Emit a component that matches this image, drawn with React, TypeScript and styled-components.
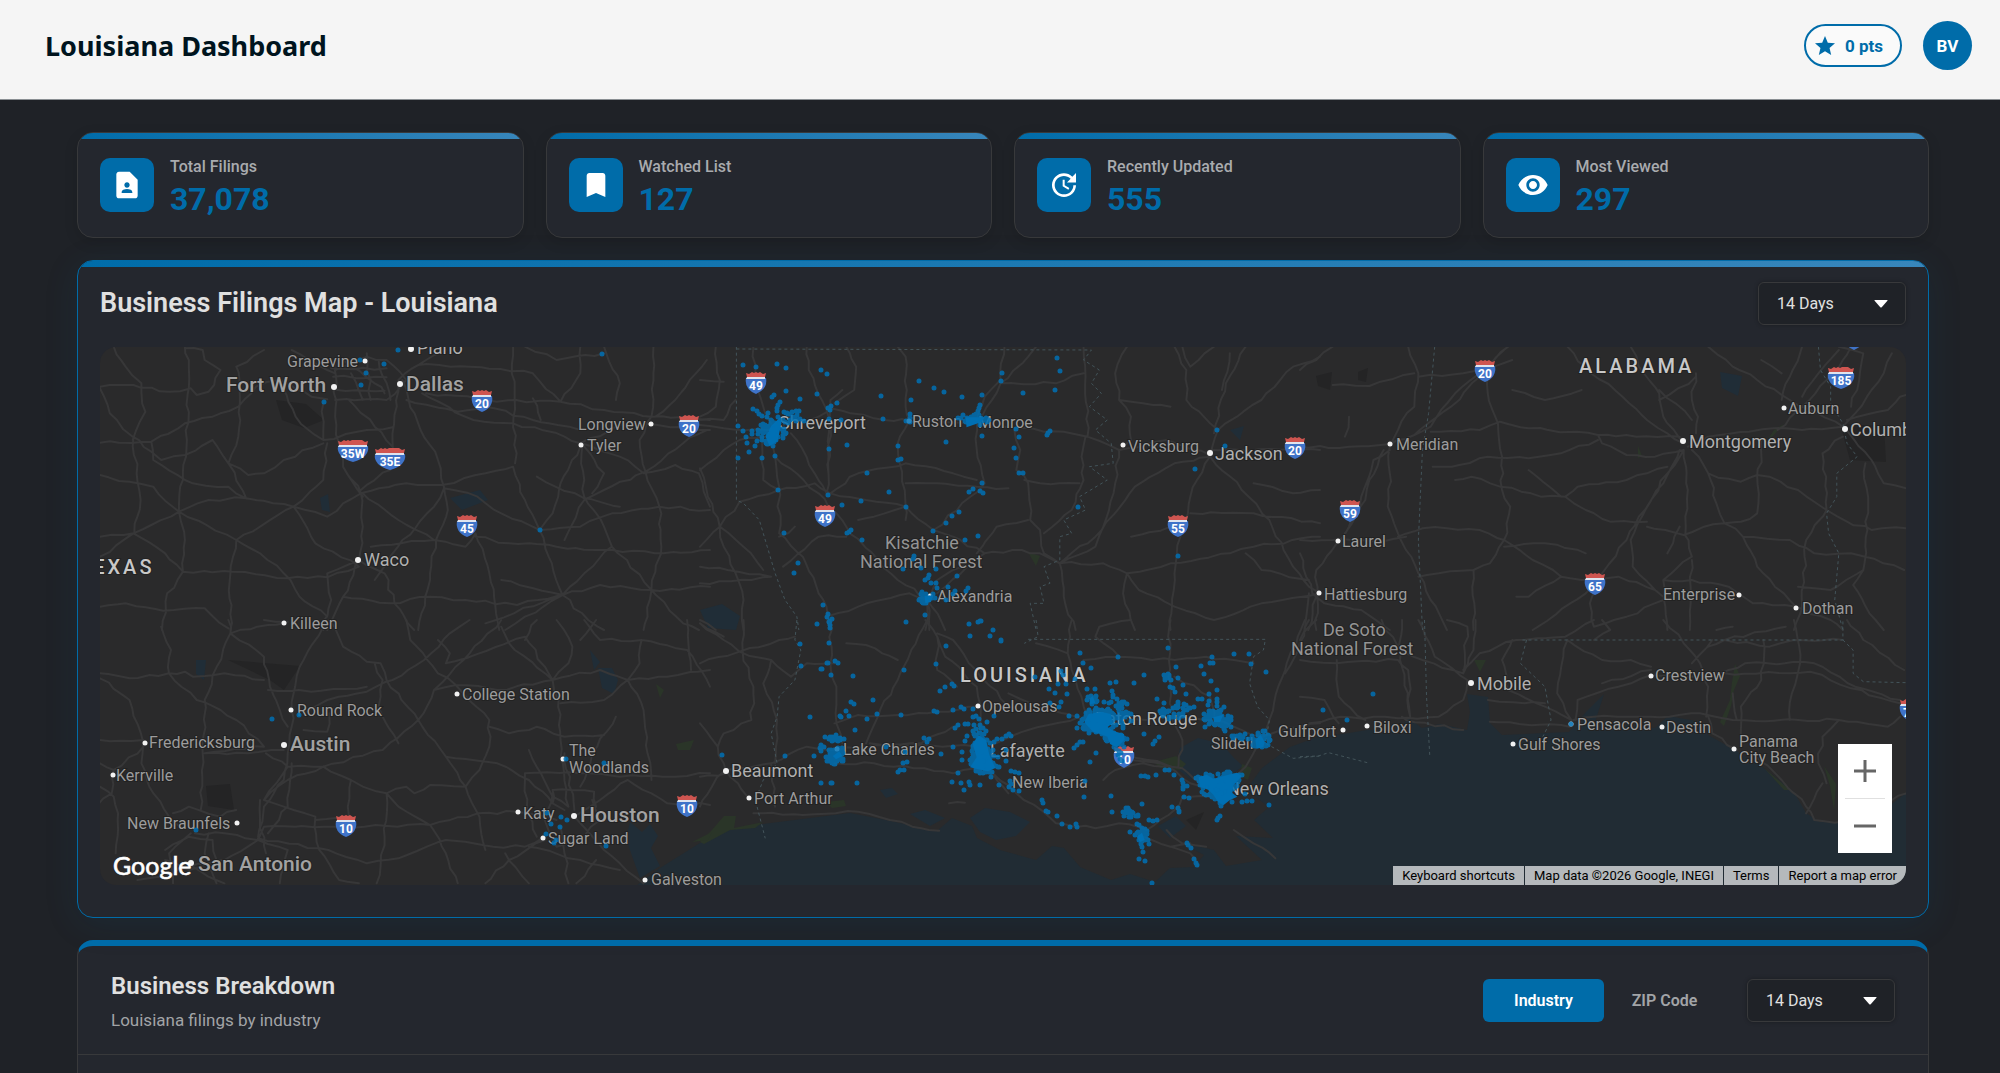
import React, { useId } from 'react';
import styled, { createGlobalStyle } from 'styled-components';
import { MdBookmark, MdContactPage, MdStar, MdUpdate, MdVisibility } from 'react-icons/md';
import type { IconType } from 'react-icons';

const blue = '#006ca9';
const sans = "Roboto, 'Liberation Sans', sans-serif";

const GlobalStyle = createGlobalStyle`
  *, *::before, *::after { box-sizing: border-box; }
  html { height: 100%; overflow: hidden; background: #1f2227; }
  body { margin: 0; font-family: ${sans}; color: #e0e0e0; }
  button, select { font: inherit; }
  h1, h2, p, dl, dd, dt { margin: 0; }
`;

const Header = styled.header`
  display: flex;
  align-items: flex-start;
  justify-content: space-between;
  height: 100px;
  padding: 21px 28px 0 45px;
  background: #f5f5f5;
  border-bottom: 1px solid #8a8f93;
`;

const PageTitle = styled.h1`
  font-family: 'Noto Sans', 'Open Sans', sans-serif;
  font-size: 27px;
  line-height: 50px;
  font-weight: 700;
  color: #00141e;
`;

const Account = styled.div`
  display: flex;
  align-items: center;
  gap: 21px;
`;

const Points = styled.button`
  display: flex;
  align-items: center;
  gap: 8px;
  height: 43px;
  padding: 0 17px 0 7px;
  border: 2px solid ${blue};
  border-radius: 22px;
  background: #fafafa;
  color: ${blue};
  font-size: 17px;
  font-weight: 700;
`;

const Avatar = styled.button`
  width: 49px;
  height: 49px;
  padding: 0;
  border: 0;
  border-radius: 50%;
  background: ${blue};
  color: #fff;
  font-size: 17px;
  font-weight: 700;
`;

const Content = styled.main`
  display: flex;
  flex-direction: column;
  gap: 22px;
  padding: 32px 71px 0 77px;
`;

const Stats = styled.dl`
  display: grid;
  grid-template-columns: repeat(4, 1fr);
  gap: 22px;
`;

const Card = styled.section<{ $active?: boolean }>`
  position: relative;
  overflow: hidden;
  border: 1px solid ${(p) => (p.$active ? blue : '#38393b')};
  border-radius: 16px;
  background: #24272e;
  box-shadow: ${(p) => (p.$active ? '0 6px 36px rgba(0, 108, 169, 0.1)' : '0 4px 14px rgba(0, 0, 0, 0.12)')};

  &::before {
    content: '';
    position: absolute;
    inset: 0 0 auto;
    height: 6px;
    background: linear-gradient(90deg, ${blue}, #3886bb);
  }
`;

const StatCard = styled(Card).attrs({ as: 'div' })`
  display: flex;
  gap: 16px;
  height: 106px;
  padding: 25px 22px;
`;

const StatIcon = styled.span`
  display: grid;
  place-items: center;
  flex: none;
  width: 54px;
  height: 54px;
  border-radius: 10px;
  background: ${blue};
  color: #fff;
`;

const StatLabel = styled.dt`
  font-size: 16px;
  line-height: 18px;
  font-weight: 500;
  color: #a9abae;
`;

const StatValue = styled.dd`
  font-size: 32px;
  line-height: 46px;
  font-weight: 700;
  color: ${blue};
`;

const MapCard = styled(Card)`
  height: 658px;
  padding: 21px 22px 0;
`;

const CardHead = styled.div`
  display: flex;
  align-items: center;
  justify-content: space-between;
`;

const MapTitle = styled.h2`
  font-size: 27px;
  line-height: 43px;
  font-weight: 600;
`;

const SelectBox = styled.label`
  position: relative;
  display: block;

  svg {
    position: absolute;
    right: 18px;
    top: 18px;
    pointer-events: none;
  }
`;

const Select = styled.select`
  appearance: none;
  display: block;
  width: 148px;
  height: 43px;
  padding: 0 18px;
  border: 1px solid #38393b;
  border-radius: 6px;
  background: #1f2227;
  box-shadow: 0 0 4px rgba(0, 0, 0, 0.3);
  color: #e0e0e0;
  font-size: 16px;
`;

const MapFrame = styled.div`
  position: relative;
  height: 538px;
  margin-top: 22px;
  overflow: hidden;
  border-radius: 16px;
  background: #2a2a2b;

  > svg {
    display: block;
    width: 100%;
    height: 100%;
    font-family: ${sans};
  }
`;

const ZoomControl = styled.div`
  position: absolute;
  right: 14px;
  bottom: 32px;
  display: flex;
  flex-direction: column;
  width: 54px;
  background: #fff;
`;

const ZoomButton = styled.button`
  display: grid;
  place-items: center;
  height: 54px;
  padding: 0;
  border: 0;
  background: none;
  color: #666;
`;

const ZoomRule = styled.span`
  height: 1px;
  margin: 0 7px;
  background: #e0e0e0;
`;

const MapFooter = styled.div`
  position: absolute;
  right: 0;
  bottom: 0;
  display: flex;
  gap: 1px;
  font-size: 13px;
  line-height: 19px;
  color: #000;

  > * {
    padding: 0 9px;
    border: 0;
    background: #b5b9bc;
    color: inherit;
    text-decoration: none;
    line-height: 19px;
  }
`;

const BreakdownCard = styled.section`
  border: 1px solid #38393b;
  border-top: 6px solid ${blue};
  border-bottom: 0;
  border-radius: 16px 16px 0 0;
  background: #24272e;
`;

const BreakdownHead = styled(CardHead)`
  height: 109px;
  padding: 0 33px;
  border-bottom: 1px solid #38393b;
`;

const BreakdownText = styled.div`
  padding-top: 4px;
`;

const BreakdownTitle = styled.h2`
  font-size: 24px;
  line-height: 32px;
  font-weight: 600;
`;

const Subtitle = styled.p`
  margin-top: 4px;
  font-size: 17px;
  line-height: 28px;
  color: #a2a4a7;
`;

const BreakdownBody = styled.div`
  height: 120px;
`;

const Controls = styled.div`
  display: flex;
  align-items: center;
  gap: 22px;
`;

const Tabs = styled.div`
  display: flex;
`;

const Tab = styled.button<{ $on?: boolean }>`
  height: 43px;
  width: 121px;
  padding: 0;
  border: 0;
  border-radius: 6px;
  background: ${(p) => (p.$on ? blue : 'transparent')};
  color: ${(p) => (p.$on ? '#fff' : '#a2a4a7')};
  font-size: 16px;
  font-weight: 600;
`;

function PeriodSelect() {
  const id = useId();
  return (
    <SelectBox htmlFor={id}>
      <Select id={id} defaultValue="14" aria-label="Period">
        <option value="14">14 Days</option>
      </Select>
      <svg width="14" height="8" viewBox="0 0 14 8" aria-hidden="true">
        <path d="M1 0h12q1 0 .4.8L7.7 7.2q-.7.7-1.4 0L.6.8Q0 0 1 0z" fill="#fff" />
      </svg>
    </SelectBox>
  );
}

/* ---------- Map drawing ---------- */

/* Every tile has its own grid; x, y place it on the map and kx, ky give the size of a grid unit. */
interface Tile { x: number; y: number; kx: number; ky: number }
const third = 1 / 3;
const tiles: Record<string, Tile> = {
  A: { x: 90, y: 340, kx: 0.3954, ky: third },
  B: { x: 700, y: 340, kx: 0.3954, ky: third },
  C: { x: 1300, y: 340, kx: 0.4082, ky: third },
  D: { x: 90, y: 620, kx: 0.3954, ky: third },
  E: { x: 700, y: 620, kx: 0.3954, ky: third },
  F: { x: 1300, y: 620, kx: 0.4082, ky: third },
  G: { x: 820, y: 640, kx: third, ky: third },
};
const at = (t: string, u: number, v: number): [number, number] => [
  Math.round(tiles[t].x + u * tiles[t].kx),
  Math.round(tiles[t].y + v * tiles[t].ky),
];

const roads: Record<string, string> = {
  A: `M25 140L110 135L200 155L255 145L270 165L300 155L330 90L290 60L285 30L240 25
    M60 20L90 80L130 130L140 215L108 300 M25 145L50 220L108 290L155 335L180 360L240 345L310 300L350 370
    M25 308L155 305L240 250L330 220L375 200L420 140L480 120L560 170L600 178
    M240 20L250 60L245 300L235 420L225 515 M110 290L118 400L128 480L112 580 M350 370L375 290L378 120L370 80L440 30
    M350 370L395 475L515 500L600 530L640 490L685 460
    M25 405L100 425L160 440L225 515L370 600L430 640L490 700L530 770L600 830
    M225 515L110 580L25 590 M110 580L25 650 M225 515L300 480L395 475 M515 500L370 600L355 700L355 870
    M515 500L590 420L600 310 M515 500L570 610L680 680
    M110 580L190 640L235 695L360 695L500 715L600 712L680 680
    M25 800L90 790L185 812L290 805L350 865 M235 695L195 760L182 870 M225 515L240 600L235 695
    M480 120L520 230L590 300 M155 305L160 360L240 420L260 430L350 440L395 475
    M350 370L400 405L440 400L490 360L590 310 M590 190L590 300L700 270L765 262
    M620 60L620 230L640 380L685 460L690 560L680 660 M655 180L720 260L765 320
    M780 130L765 300L775 370L685 450 M790 120L830 250L880 360L895 440L905 510L875 600L860 700L830 870
    M690 460L780 540L870 600 M685 460L800 430L890 435L1000 400L1070 380
    M895 445L980 470L1040 520L1137 570L1160 650L1195 765 M1137 570L1240 560L1320 520L1440 500L1568 510
    M840 160L970 240L1070 250L1200 290L1240 310 M850 160L1000 180L1190 185L1300 210L1420 230L1568 240
    M800 180L930 215L1000 200L1120 240L1160 250L1240 270
    M780 120L850 60L900 30 M830 75L960 80L1120 100L1190 185 M1070 20L1075 370 M1120 175L1140 240
    M1070 380L1100 480L1137 570 M1240 320L1190 430L1170 520L1137 570 M1130 410L1250 475L1340 500
    M1245 320L1250 470L1300 560L1320 620L1420 750 M1240 310L1340 350L1400 400L1480 375L1540 400
    M1405 395L1300 450L1250 480L1200 600 M1240 310L1360 250L1568 270 M1250 320L1300 400L1270 460
    M680 660L600 700L610 780L590 870 M680 660L640 770L600 870 M680 660L745 700L770 790L820 870
    M640 770L760 790L860 770L950 780L1080 795L1190 765 M640 380L690 470 M1560 270L1500 310L1405 395
    M1195 765L1100 830L1050 870 M1195 765L1260 840L1300 870 M1195 765L1290 735L1420 750L1568 740
    M1420 750L1410 830L1400 870 M1420 750L1500 850L1540 870 M1540 400L1568 500 M1040 720L1195 765
    M710 620L870 600L950 620L975 580L1010 700L1035 870 M975 590L1060 610L1180 620L1300 630L1450 640L1568 630
    M1300 20L1340 130L1330 180 M1425 20L1420 230L1390 300L1405 395L1440 500L1445 620L1420 750
    M1560 60L1480 180L1430 230 M720 720L790 600L870 500L895 445 M1320 620L1250 700L1195 765L1000 850
    M610 85L750 85 M615 110L750 112 M625 150L745 152 M640 60L720 130L745 160 M660 100L690 180 M700 40L710 180 M730 60L760 180
    M620 180L750 180L800 120L750 60L700 50L620 90 M510 30L600 90L620 100 M1100 20L1180 60L1300 40 M1190 185L1240 100L1240 20`,
  B: `M40 20L50 120L40 200L0 230 M0 120L60 125 M135 20L140 100L160 200L185 260L190 350L300 460L370 560L450 660L500 720L575 780L580 870
    M0 255L60 265L170 270L300 230L330 205L440 235L560 245L700 250L800 265L920 275L980 290L1060 330
    M0 390L60 330L100 300L170 290 M0 385L20 470L50 560L110 620L160 690
    M50 560L60 620L90 700L110 780L110 870 M50 560L0 620 M50 560L100 485L200 450L290 430L330 460L400 400L520 370L640 400L700 420
    M270 20L275 90L325 230L325 400L320 460 M370 20L395 80L390 150L340 190 M500 20L520 50L520 200L530 240L500 310L505 370L520 500L520 540
    M190 350L200 440L200 580L260 650L300 760L320 800L330 870 M160 290L155 360L160 420L200 450
    M230 280L290 400L320 460 M370 590L300 590L210 680
    M330 460L420 480L520 500L590 570L720 430L700 330L700 240L720 170L760 120L770 20
    M700 250L760 130L830 50L850 20 M760 130L900 130L970 100 M360 150L330 180L325 400
    M520 430L600 430L700 440L780 445 M0 680L70 690L180 710L130 720L0 730 M320 830L400 800L530 760L575 780
    M575 780L600 720L720 640L790 630L860 640L910 670 M590 570L640 590L720 640L660 700L600 760
    M400 540L440 530L520 500 M575 780L620 870 M575 780L570 870
    M795 270L810 330L800 390L830 430L835 540L860 570L870 640L910 670
    M820 420L860 430L960 430 M870 580L940 510L970 420L965 350L975 290 M910 670L1000 620L1020 560L1050 430L1060 330
    M970 20L975 110L980 290 M1080 20L1050 100L1060 180L1090 230L1090 300L1070 320
    M910 670L1020 670L1080 700L1190 670L1340 640L1400 620L1568 590
    M910 670L920 770L950 870 M910 670L1000 590L1100 440L1200 370L1290 350
    M1200 20L1230 90L1230 180L1310 270L1290 350L1240 470L1215 590L1200 700L1190 870
    M1380 20L1330 130L1300 280 M1340 40L1320 150 M1060 330L1180 300L1290 345 M1290 350L1370 450L1440 540L1500 680L1540 740L1568 760
    M1290 330L1568 330 M1310 270L1420 180L1500 80L1568 50 M1220 20L1240 80L1300 20 M1240 520L1400 520L1568 550
    M1080 700L1110 750L1200 800L1300 840L1420 790L1568 760 M1080 700L1070 760L1100 870 M1190 200L1120 190L1060 180
    M240 560L200 590 M1540 760L1530 870 M830 540L750 560L700 640 M1400 430L1500 460L1568 450 M1090 590L1190 560
    M1380 640L1420 690L1540 720 M90 180L60 240L0 240 M0 840L40 870`,
  C: `M0 90L40 60L80 20 M0 320L120 320L220 312L280 285L320 260L380 160L440 100L510 20 M280 285L370 200L440 110L500 30
    M220 330L180 360L150 470L120 560L90 610L40 690L40 870 M205 330L170 420L160 480L110 580
    M265 20L290 100L280 200L240 270L220 320L220 400L215 500L240 580L290 700L320 780L360 870
    M290 110L400 100L520 60 M80 135L170 138L280 100 M120 230L110 290
    M460 100L460 160L485 250L495 350L495 450L515 500L500 600L465 670L425 690L425 870
    M320 275L440 270L490 245L560 265L730 285L740 310L800 345L870 350L940 330 M730 285L800 285L930 290
    M325 380L390 375L460 350L560 355L660 330L730 300 M380 420L420 410L490 440L590 470L650 470L700 510L760 545L850 545
    M650 470L680 440L800 420L900 380 M300 565L360 565L440 570L500 600L570 660L640 710L690 720L780 710L870 750L890 770
    M240 590L300 565 M0 600L80 600L200 605L260 590 M655 20L700 80L790 170L850 240L900 280L940 310
    M810 20L830 80L880 160L890 230L940 310 M880 150L920 190L960 240 M970 100L960 180L975 230L970 280
    M940 330L900 400L850 500L810 600L815 680L870 750 M930 330L890 430L830 530L800 600L740 700L700 760L570 870
    M940 330L950 450L945 560L960 650L890 720L895 800L900 870 M960 330L1000 400L1020 490L1040 550L1085 590L1120 680L1215 800
    M950 320L1000 290L1100 275L1160 265L1230 270L1330 260 M1170 270L1230 200L1290 120L1330 60L1350 20
    M1000 20L1060 80L1120 120L1200 180L1330 260 M1180 180L1200 110L1230 20 M1230 170L1270 100L1320 30
    M1000 400L1080 425L1120 405L1150 410L1220 450L1290 510L1340 545L1400 570L1485 565 M1120 410L1130 340L1130 300
    M1120 410L1120 520L1080 545L1040 550L990 560L940 585L850 560 M1330 290L1280 340L1290 510L1240 600L1230 800L1210 870
    M1330 260L1400 360L1430 430L1485 445 M1385 370L1390 570L1380 690L1355 735L1410 840L1430 870
    M1330 260L1360 220L1400 150L1430 100L1450 40 M1340 240L1440 210L1470 170L1485 165 M1320 20L1380 40L1370 120L1350 200
    M1085 590L1200 600L1260 640L1350 640L1480 690 M890 720L960 720L1050 740L1110 790L1215 800L1300 840L1330 870
    M500 620L600 610L700 640 M425 690L340 700L290 710 M640 710L560 770L530 770 M730 740L710 790L720 860L800 830L890 780
    M960 660L955 870 M0 640L30 760L60 790L150 810L220 870 M40 770L20 870 M520 150L600 180L690 150 M560 390L640 470
    M880 180L970 110 M1130 60L1180 100 M1220 740L1300 750L1380 690 M930 560L900 640 M1060 860L1020 870`,
  D: `M25 160L100 175L200 160L240 155L260 170L340 160L440 180 M180 20L205 90L200 160L270 240L330 270L370 300L440 380
    M350 0L355 40L290 240L285 400L280 570 M355 40L440 110L455 200L480 270L500 320 M355 40L450 15L490 10
    M590 20L540 120L515 220L510 320L500 400L490 480L440 560L425 650 M605 0L640 80L700 125L735 130L750 180L830 300L900 410L950 500L985 590L1000 690
    M450 210L560 215L700 200 M540 280L600 240L700 215L765 180L845 120L910 40L960 0 M540 330L600 335L605 280
    M25 175L100 240L135 370L130 430L150 500L200 590L230 620 M25 360L135 360 M25 500L60 530L70 600L65 700
    M60 450L55 520L0 560 M135 380L60 450L25 430
    M440 380L290 400 M490 390L400 400L290 400 M445 400L500 440L590 440L740 390L830 300L870 210L925 195
    M500 440L440 540 M590 440L660 480L690 500L750 520L800 500L820 520L860 495L950 500
    M590 440L500 480L440 540L490 560L570 590L580 690L630 780 M750 520L745 650L725 790 M660 480L655 590L570 600
    M265 640L340 640L425 660L440 620L640 620L860 615L980 580L1080 575L1180 600
    M425 660L500 690L480 790 M425 660L340 720L250 740 M425 655L580 685L700 730L780 715L900 660L1020 680L1100 680L1150 650
    M860 615L900 700L930 790 M750 520L780 560L860 615 M870 210L960 100L1040 0 M800 0L810 60L880 160L925 195L1010 300L1010 380L985 450L950 500
    M900 410L1030 430L1110 480L1170 550L1200 570 M720 130L740 180L730 260L780 370 M880 60L910 100L900 130L1100 50L1170 180
    M925 195L1030 210L1170 180L1290 150L1360 180L1460 170L1568 150 M1040 20L1060 70L1170 180L1185 240L1190 360L1210 560
    M1130 0L1100 60 M1180 0L1220 80L1210 130L1170 180 M1250 0L1290 60L1395 60L1510 90L1568 200 M1395 60L1390 130L1360 180L1400 270L1420 480
    M1510 0L1520 150 M1280 0L1240 60 M1360 180L1300 240L1190 250 M1010 320L1060 340L1130 320L1200 350L1300 345
    M1100 460L1240 460L1340 470L1480 470L1568 460 M1100 460L1105 560L1130 650 M1170 550L1170 510L1275 515L1280 560
    M1110 390L1170 530L1210 560 M1200 400L1225 570 M1240 500L1270 400L1330 290 M1170 520L1150 600L1180 680L1250 650L1290 600L1270 540
    M1225 590L1300 690L1400 790 M1225 590L1290 540L1360 480L1460 550L1568 555 M1150 660L1060 720L1000 790 M1110 680L1240 720L1340 750
    M1050 700L1110 790 M1190 620L1200 700L1210 790 M1280 720L1230 790 M440 0L500 5 M255 640L200 700L210 790 M300 640L290 700L320 790
    M190 690L250 650L310 660L320 720L250 750L190 720 M210 580L250 560L330 590L370 570 M255 720L200 770L120 780 M260 740L340 790
    M430 540L430 600L445 700 M510 430L500 560L450 640 M630 780L680 790`,
  E: `M0 130L100 95L200 60L240 50 M0 10L60 60L100 95L180 120L230 170L270 130L340 130
    M110 0L108 95L135 200L130 300L60 340L45 380L65 450 M180 120L160 190L195 300L190 430 M0 310L45 380
    M65 450L180 430L270 380L350 390L420 380L560 375L700 380
    M65 450L30 500L0 560 M65 450L120 530 M0 470L65 460 M135 580L260 585L400 575L480 600L560 625L605 632
    M330 0L330 130L345 200L345 310L360 370 M575 0L500 180L450 290L420 370 M570 0L600 50L620 110L700 200L710 260L700 380
    M600 40L640 60L680 130L780 260 M600 50L600 150L650 200 M370 70L420 75L500 120
    M340 310L400 285L500 285L600 275L700 260 M180 430L190 560 M340 430L440 430L640 460L720 440L800 520L900 610L1000 625L1060 610L1130 630L1200 570L1220 530
    M700 390L830 330L960 290 M960 295L860 260L780 220 M980 290L950 180L930 100L940 0 M1190 0L1185 170L1195 300L1220 360L1210 440
    M970 120L1060 110L1200 120L1280 110L1400 130 M1000 300L1080 400L1180 435L1240 490L1270 500 M1090 420L1220 445L1270 490
    M1000 300L1130 300L1200 290L1300 300L1420 350L1470 330L1568 310 M1530 0L1480 150L1440 300L1420 360L1380 440L1340 490
    M1480 160L1500 120L1540 0 M1200 170L1290 230L1300 300 M1220 530L1290 530 M1180 630L1220 670L1280 680 M1120 650L1190 680L1240 670
    M1350 630L1400 670L1455 715 M1020 480L1050 450L1120 430L1180 440 M0 10L60 50 M850 70L930 100 M1060 110L1000 50L1010 20L1090 0
    M430 370L560 370L640 320 M630 550L670 548 M780 520L740 460 M1190 680L1240 700L1260 740`,
  F: `M0 60L40 0 M200 0L240 80L300 120L400 160 M90 120L95 230L160 300 M0 120L90 130L240 120L265 150L270 290
    M250 0L245 120L270 290 M290 0L330 110L410 180 M360 0L410 20L400 160 M430 0L425 90L400 160
    M410 180L400 240L340 290L240 295L100 290L0 320 M400 150L440 100L530 60L650 50L720 0
    M520 60L495 120L510 210L600 260L665 300 M655 60L640 140L630 220L665 300 M655 60L740 120L810 120L860 140
    M460 240L550 250L600 250 M465 305L660 320 M675 300L680 240L780 200L860 165L960 170L1030 160L1090 130L1260 130L1360 200L1470 240
    M1040 160L1250 155L1350 205L1470 250 M740 190L860 150 M890 0L940 70L980 130L1000 200L995 290 M1010 60L960 130
    M1135 60L1130 180L1080 260L1080 380 M1210 0L1225 130L1205 220L1200 300 M1000 80L1040 60L1150 80L1210 60L1330 60
    M670 300L720 290L860 290L980 280L1060 300L1320 300L1440 320L1470 290 M1000 290L1010 340L1070 390
    M1070 300L1060 220 M1320 300L1280 350L1270 430L1290 490 M1240 580L1280 490 M1110 400L1180 480L1240 560L1260 600L1310 608L1400 600L1450 540L1485 520
    M1340 0L1380 60L1480 150 M740 0L760 30L720 60 M0 230L60 240L95 310 M250 290L260 300L400 330 M1190 20L1040 60`,
};

const borders: Record<string, string> = {
  B: `M92 20L92 480L110 490L150 540L170 620L190 700L215 780L245 830L250 870 M92 27L990 30L970 60L1010 90L990 130L1015 160L985 200L1030 240L1000 270L1040 310L1045 370L985 380L1030 420L960 470L975 510L920 540L940 580L910 590L910 660L870 680L885 730L860 740L870 790L835 790L850 870`,
  C: `M330 20L315 220L300 330L290 600L300 870 M1270 20L1275 90L1300 140L1300 190L1330 250L1340 310L1365 350L1315 400L1315 470L1290 520L1295 580L1320 640L1310 780L1330 870`,
  E: `M245 0L240 60L255 90L240 180L200 230L195 290L180 340L195 430L160 480L140 540L165 655 M850 0L855 50L820 70 M830 58L1430 58L1425 90L1400 110L1390 190L1410 260L1440 300L1430 370L1500 415L1568 408`,
  F: `M305 0L310 230L318 410 M0 410L45 408L70 398L165 428 M545 60L1330 60L1330 0 M555 60L540 130L600 200L615 300L595 350 M1330 60L1355 90L1355 160L1380 185L1485 188`,
};

const gulf = 'M636 886L660 868L700 843L724 831L763 824L850 813L886 820L937 831L952 818L972 826L977 838L1000 850L1036 860L1052 846L1064 848L1080 867L1111 880L1130 874L1155 882L1170 868L1194 867L1204 855L1180 842L1214 850L1226 866L1262 860L1236 836L1273 838L1254 820L1269 807L1246 790L1262 768L1290 747L1320 736L1343 734L1367 730L1400 729L1408 718L1422 728L1440 724L1467 730L1470 712L1467 694L1488 697L1490 723L1502 735L1569 732L1586 712L1604 694L1595 722L1655 728L1668 716L1702 722L1708 735L1735 750L1761 766L1794 792L1806 813L1820 822L1860 822L1871 820L1906 793L1906 886Z';
const waters = [
  'M630 822L642 832L650 824L658 836L651 848L660 866L640 878L632 856L626 838Z',
  'M1180 748L1198 738L1222 744L1234 758L1243 766L1230 776L1206 772L1190 779L1176 768Z',
  'M970 818L985 808L1010 812L1030 822L1016 836L996 840L980 832Z',
  'M910 814L925 810L945 818L930 826Z M880 790L892 788L898 794L886 798Z',
  'M598 668L612 668L618 680L614 694L602 688Z M590 650L600 662L594 670Z',
  'M700 610L722 604L740 616L736 630L708 628Z M450 498L480 490L488 500L462 510Z',
  'M320 498L328 494L330 512L322 510Z M196 660L206 660L204 680L196 674Z M1720 372L1742 376L1738 396L1722 388Z',
  'M1158 826L1176 816L1186 826L1170 838Z M1230 430L1244 426L1240 440Z',
];
const dark = ['M276 400L306 404L324 420L304 428L282 420Z', 'M1840 424L1884 426L1886 462L1850 460Z', 'M206 786L230 784L234 810L208 806Z', 'M1316 376L1332 372L1330 390L1318 386Z', 'M1358 372L1368 368L1366 382L1358 380Z', 'M1186 820L1204 812L1196 830Z', 'M228 660L300 666L284 690L270 680Z'];
const parks = ['M700 842L712 830L724 816L736 816L734 828L763 822L755 828L730 830L704 844Z', 'M1154 762L1176 756L1186 764L1180 770L1160 768Z', 'M826 802L844 800L846 806L832 808Z', 'M1028 552L1040 556L1036 566Z M1762 448L1784 424L1774 430Z', 'M656 684L664 690L660 698Z M676 744L694 740L690 750L678 750Z M692 842L712 832L708 840Z', 'M1638 446L1642 456L1638 458Z', 'M1474 660L1486 660L1480 672Z', 'M1738 646L1735 664L1740 676L1734 690L1731 706L1724 726L1720 722L1730 700L1732 682Z', 'M1764 768L1790 790L1784 790Z M1824 766L1836 784L1834 810L1830 786Z', 'M1242 764L1252 768L1248 780L1240 776Z'];

type Label = [tile: string, u: number, v: number, text: string, kind?: 's' | 'm' | 'l' | 'state' | 'park', dot?: [number, number]];
const labels: Label[] = [
  ['A', 826, 42, 'Plano', 'm', [811, 27]],
  ['A', 499, 80, 'Grapevine', 's', [695, 62]],
  ['A', 343, 156, 'Fort Worth', 'l', [616, 140]],
  ['A', 799, 152, 'Dallas', 'l', [783, 132]],
  ['A', 1234, 269, 'Longview', 's', [1420, 252]],
  ['A', 1258, 333, 'Tyler', 's', [1243, 316]],
  ['A', 693, 678, 'Waco', 'm', [679, 659]],
  ['A', -30, 703, 'TEXAS', 'state'],
  ['A', 505, 867, 'Killeen', 's', [491, 849]],
  ['B', 200, 267, 'Shreveport', 'm'],
  ['B', 537, 262, 'Ruston', 's', [528, 242]],
  ['B', 703, 264, 'Monroe', 's'],
  ['B', 468, 626, 'Kisatchie', 'park'],
  ['B', 404, 683, 'National Forest', 'park'],
  ['B', 600, 787, 'Alexandria', 's', [582, 768]],
  ['B', 1083, 335, 'Vicksburg', 's', [1071, 316]],
  ['B', 1303, 360, 'Jackson', 'm', [1289, 340]],
  ['C', 683, 98, 'ALABAMA', 'state'],
  ['C', 1196, 221, 'Auburn', 's', [1186, 203]],
  ['C', 1348, 287, 'Columbus', 'm', [1334, 267]],
  ['C', 953, 324, 'Montgomery', 'm', [939, 304]],
  ['C', 234, 331, 'Meridian', 's', [221, 312]],
  ['C', 103, 621, 'Laurel', 's', [92, 602]],
  ['C', 60, 779, 'Hattiesburg', 's', [46, 760]],
  ['C', 890, 781, 'Enterprise', 's', [1075, 764]],
  ['C', 1229, 822, 'Dothan', 's', [1216, 804]],
  ['D', 524, 289, 'Round Rock', 's', [509, 271]],
  ['D', 506, 392, 'Austin', 'l', [490, 374]],
  ['D', 149, 385, 'Fredericksburg', 's', [138, 368]],
  ['D', 67, 483, 'Kerrville', 's', [57, 465]],
  ['D', 94, 628, 'New Braunfels', 's', [373, 609]],
  ['D', 272, 752, 'San Antonio', 'l', [256, 729]],
  ['D', 941, 240, 'College Station', 's', [927, 222]],
  ['D', 1211, 409, 'The', 's', [1196, 416]],
  ['D', 1211, 458, 'Woodlands', 's'],
  ['D', 1095, 596, 'Katy', 's', [1083, 577]],
  ['D', 1240, 606, 'Houston', 'l', [1225, 587]],
  ['D', 1159, 672, 'Sugar Land', 's', [1145, 654]],
  ['D', 1418, 796, 'Galveston', 's', [1403, 779]],
  ['E', 658, 185, 'LOUISIANA', 'state'],
  ['E', 712, 277, 'Opelousas', 's', [702, 258]],
  ['E', 1000, 314, 'Baton Rouge', 'm'],
  ['E', 1293, 387, 'Slidell', 's'],
  ['E', 1463, 350, 'Gulfport', 's', [1626, 331]],
  ['E', 361, 406, 'Lake Charles', 's', [346, 386]],
  ['E', 733, 412, 'Lafayette', 'm'],
  ['E', 790, 503, 'New Iberia', 's'],
  ['E', 79, 472, 'Beaumont', 'm', [65, 453]],
  ['E', 137, 552, 'Port Arthur', 's', [123, 534]],
  ['E', 1334, 525, 'New Orleans', 'm'],
  ['F', 56, 48, 'De Soto', 'park'],
  ['F', -21, 105, 'National Forest', 'park'],
  ['F', 433, 209, 'Mobile', 'm', [418, 189]],
  ['F', 178, 338, 'Biloxi', 's', [164, 319]],
  ['F', 870, 184, 'Crestview', 's', [860, 167]],
  ['F', 534, 389, 'Gulf Shores', 's', [523, 371]],
  ['F', 679, 330, 'Pensacola', 's', [665, 312]],
  ['F', 897, 338, 'Destin', 's', [886, 320]],
  ['F', 1075, 382, 'Panama', 's', [1064, 387]],
  ['F', 1075, 430, 'City Beach', 's'],
];

const labelStyle = {
  s: { size: 16, weight: 400, fill: '#9c9c9c', gap: 0 },
  m: { size: 18, weight: 400, fill: '#b0b0b0', gap: 0 },
  l: { size: 21, weight: 500, fill: '#a2a2a2', gap: 0 },
  park: { size: 18, weight: 400, fill: '#949494', gap: 0 },
  state: { size: 20, weight: 500, fill: '#c8c8c8', gap: 3 },
};

const shields: [tile: string, u: number, v: number, text: string][] = [
  ['A', 991, 182, '20'], ['A', 1514, 259, '20'], ['A', 664, 332, '35W'], ['A', 758, 356, '35E'], ['A', 953, 558, '45'],
  ['B', 141, 129, '49'], ['B', 315, 529, '49'], ['B', 1506, 324, '20'], ['B', 1210, 558, '55'],
  ['C', 453, 94, '20'], ['C', 1325, 114, '185'], ['C', 123, 514, '59'], ['C', 723, 731, '65'], ['C', 1356, -4, '85'],
  ['D', 648, 618, '10'], ['D', 1511, 557, '10'], ['E', 1073, 412, '10'], ['F', 1494, 270, '75'],
];

const filings: Record<string, string> = {
  A: '778,29 744,72 699,100 686,134 591,187 1296,41 1137,569 683,60',
  B: `110,76 142,81 196,71 218,85 307,90 322,101 217,153 187,166 183,170 252,177 295,162 203,186 198,195 196,204 194,212 459,168 553,124 593,144 618,156 662,172 713,164 533,180 763,100 760,122
    903,54 911,94 899,151 817,158 708,195 706,205 704,214 347,190 332,198 324,204 328,210 325,238 462,238 531,222 530,235 522,242 530,247 886,273 877,286 881,280 800,266 806,292 793,324 799,355 808,400 816,400
    714,287 622,306 502,318 508,358 502,360 373,314 327,326 189,347 158,355 97,355 97,257 110,273 132,272 125,337 138,318 120,310 117,292 422,398 198,451 324,465 358,496 407,484 479,457 521,502
    713,430 690,446 681,457 708,452 716,459 654,516 638,529 622,548 589,573 704,587 670,599 213,580 383,570 378,577 372,580 409,600 957,500 1308,269 1328,319 1253,386 1209,647
    249,668 237,699 540,648 538,657 513,686 558,683 597,687 649,709 578,706 576,714 569,720 585,728 597,728 628,741 677,744 674,752 646,752 600,745 622,780 640,762 562,757 568,766 555,780 570,824
    312,794 323,822 320,832 333,838 326,846 328,856 328,864 295,852 520,847 681,852 709,842 704,846 135,208 143,214 150,222 158,229 172,219 170,232 242,212 250,214 245,224 252,236 356,240 262,244 218,218 228,222 236,230`,
  D: '461,298 529,285 268,630 1204,416 1301,428 1157,578 1190,592 1206,601 1166,612 1188,622 1154,642 1174,668 1178,660 1306,679',
  E: `295,12 328,4 328,14 328,24 326,69 254,73 255,138 305,147 322,128 341,123 349,130 332,166 386,167 279,292 356,290 55,405 214,408 288,408 305,375 303,384 306,392 314,380 305,490 333,490 396,490
    316,352 330,352 345,346 355,353 350,360 340,356 622,77 682,49 741,30 733,49 761,60 710,4 681,12 520,6 597,132 516,150 962,98 1056,110 1432,157`,
  G: `27,8 24,69 46,63 55,70 5,88 34,105 98,107 92,186 101,192 78,212 88,228 61,229 158,181 171,221 141,237 105,270 243,224 252,90 377,17 348,72 542,2 359,153 374,142 397,131 402,138
    780,39 790,70 812,85 893,50 1043,23 722,92 730,104 764,116 715,132 739,132 688,146 706,160 741,163 802,146 826,147 646,112 690,190 722,187 716,201 748,228 770,228
    871,129 889,125 943,129 972,106 1043,102 1042,114 1034,115 1052,120 1075,113 1068,80 1088,134 1050,142 1060,145 1066,155 1099,161 1011,177 1033,190 1075,187 912,186 876,153 880,165 853,186
    1143,77 1177,50 1170,68 1180,68 1243,41 1288,42 1292,71 1339,97 1153,102 1174,123 1191,150 1166,162 1134,177 1146,178 1166,184 1190,176 1192,186 1122,200 1106,203 1099,196 1164,196 1155,262
    343,213 352,216 400,209 422,201 431,207 458,207 468,228 460,230 478,236 502,246 523,229 405,264 414,256 434,252 444,252 462,254 440,288 434,302 400,322 426,336 426,360 364,342 326,298 312,294 320,306
    546,297 558,288 568,282 572,288 530,298 523,306 557,330 534,350 558,363 413,399 396,427 424,430 448,427 450,436 432,449 479,435 513,411 538,434 570,424 572,432 566,440 578,450 596,453 574,394 586,395 596,400
    248,370 261,367 253,391 234,396 239,390 199,322 256,336 34,429 4,429 110,429 796,424 791,471 872,469
    770,265 780,307 788,306 770,315 762,325 828,338 810,366 972,283 1017,290 1004,302 1000,312
    667,480 668,490 677,512 684,516 712,529 727,552 750,561 768,553 772,560 964,407 974,408 984,411 1007,406 1036,391 1047,391 1062,404 967,491 877,516
    1086,420 1088,430 1090,440 1100,437 1088,446 1091,470 1108,473 1057,501 1075,504 1077,512 1076,516 986,540 1000,543 1012,541 930,576 950,551 958,556 966,564 974,568 980,572
    1348,494 1266,486 1282,484 1297,483 1276,462 1194,534 1200,528 1190,540 958,656 976,662 996,728 970,636 966,622 988,612
    1100,608 1105,614 1112,625 1123,657 1128,668 1132,675 1048,212 1030,206 888,326 898,332 894,344 900,356 904,340 905,364 912,322`,
  F: '178,221 56,271 114,299 665,312',
};

/* Filled hearts of the busiest areas, each ringed with scattered points. */
const cores: Record<string, string> = {
  G: `M793 246L806 222L826 218L846 216L872 222L878 250L862 262L882 274L912 282L914 300L890 322L870 312L862 290L840 282L820 276L806 262Z
    M458 312L476 286L498 300L508 344L526 384L504 394L474 388L450 382L470 352Z
    M1136 412L1160 404L1180 416L1220 406L1250 398L1266 408L1240 436L1236 458L1252 470L1230 480L1210 496L1194 486L1180 464L1166 450L1140 440Z
    M1306 300L1322 284L1334 306L1330 322L1310 326Z M950 590L966 578L974 600L960 606Z
    M808 176L818 168L826 188L810 194Z M1180 232L1210 224L1200 246L1182 246Z`,
  B: 'M672 232L720 232L712 246L674 262Z M180 258L204 230L206 250L196 304L176 318L166 290Z M568 768L590 766L584 786L570 790Z',
  E: 'M336 408L352 394L360 408L344 418Z',
};
type Cluster = [tile: string, u: number, v: number, ru: number, rv: number, count: number];
const clusters: Cluster[] = [
  ['B', 185, 280, 36, 40, 46], ['B', 222, 232, 28, 18, 14], ['B', 160, 285, 28, 34, 18], ['B', 692, 238, 44, 22, 32], ['B', 574, 774, 24, 18, 18],
  ['G', 835, 244, 56, 42, 90], ['G', 886, 296, 34, 26, 32], ['G', 884, 210, 46, 40, 34], ['G', 912, 236, 26, 28, 16], ['G', 815, 178, 18, 18, 14],
  ['G', 484, 346, 38, 54, 80], ['G', 480, 276, 22, 24, 16], ['G', 500, 380, 36, 20, 24],
  ['G', 1200, 440, 62, 40, 90], ['G', 1160, 420, 34, 18, 26], ['G', 1240, 408, 32, 16, 20], ['G', 1210, 480, 28, 22, 16],
  ['G', 1188, 234, 46, 24, 40], ['G', 1216, 260, 18, 14, 12], ['G', 1268, 290, 34, 10, 14], ['G', 1322, 300, 28, 30, 34], ['G', 1066, 214, 46, 26, 30],
  ['G', 1196, 210, 34, 14, 12], ['G', 934, 518, 28, 18, 22], ['G', 964, 596, 24, 22, 24], ['G', 36, 356, 22, 14, 14], ['G', 54, 336, 14, 12, 10],
  ['G', 44, 294, 30, 10, 12], ['G', 1044, 110, 12, 16, 5], ['E', 345, 408, 30, 26, 24],
];

function randomFrom(start: number) {
  let seed = start;
  return () => {
    seed = (seed * 16807) % 2147483647;
    return seed / 2147483647;
  };
}

function scatter(list: Cluster[]): [number, number][] {
  const rnd = randomFrom(20);
  return list.flatMap(([t, u, v, ru, rv, count]) =>
    Array.from({ length: count }, () => {
      const a = rnd() * Math.PI * 2;
      const r = Math.sqrt(rnd());
      return at(t, u + Math.cos(a) * r * ru, v + Math.sin(a) * r * rv);
    }),
  );
}

const points: [number, number][] = [
  ...Object.entries(filings).flatMap(([t, list]) =>
    list.trim().split(/\s+/).map((pair) => {
      const [u, v] = pair.split(',').map(Number);
      return at(t, u, v);
    }),
  ),
  ...scatter(clusters),
];
const pointPath = points.map(([x, y]) => `M${x} ${y}h0`).join('');

/* Bends each road gently between its junctions, so that no stretch runs dead straight. */
function meander(d: string): string {
  const rnd = randomFrom(77);
  return d
    .split('M')
    .filter((part) => part.trim())
    .map((part) => {
      const stops = part.trim().split('L').map((s) => s.trim().split(' ').map(Number));
      let out = `M${stops[0].join(' ')}`;
      for (let i = 1; i < stops.length; i += 1) {
        const [x0, y0] = stops[i - 1];
        const [x1, y1] = stops[i];
        const steps = Math.max(1, Math.round(Math.hypot(x1 - x0, y1 - y0) / 26));
        for (let k = 1; k < steps; k += 1) {
          const f = k / steps;
          out += `L${Math.round(x0 + (x1 - x0) * f + (rnd() - 0.5) * 9)} ${Math.round(y0 + (y1 - y0) * f + (rnd() - 0.5) * 9)}`;
        }
        out += `L${x1} ${y1}`;
      }
      return out;
    })
    .join('');
}
const roadPaths = Object.fromEntries(Object.entries(roads).map(([t, d]) => [t, meander(d)]));

function TileLayer({ data }: { data: Record<string, string> }) {
  return (
    <>
      {Object.entries(data).map(([t, d]) => {
        const { x, y, kx, ky } = tiles[t];
        return <path key={t} d={d} vectorEffect="non-scaling-stroke" transform={`translate(${x} ${y}) scale(${kx} ${ky})`} />;
      })}
    </>
  );
}

function Shield({ x, y, text }: { x: number; y: number; text: string }) {
  const w = text.length > 2 ? (text === '185' ? 13 : 15) : 10;
  return (
    <g transform={`translate(${x} ${y})`}>
      <path d={`M${-w} -5Q${-w - 2} 6 0 11Q${w + 2} 6 ${w} -5z`} fill="#3f73c8" />
      <path d={`M${-w} -10l3 1 3-2 2 1 2-1 2 1 2-1 ${w * 2 - 20} 0 3 2 3-1-1 4H${1 - w}z`} fill="#cf5550" />
      <path d={`M${1 - w} -6H${w - 1}V-4H${-w}z`} fill="#dfe4ee" />
      <text y="7" textAnchor="middle" fontSize="12" fontWeight="700" fill="#fff">{text}</text>
    </g>
  );
}

function FilingsMap() {
  return (
    <svg viewBox="100 347 1806 538" preserveAspectRatio="xMidYMid slice" role="img" aria-label="Map of business filings">
      <g fill="#242425">{dark.map((d) => <path key={d} d={d} />)}</g>
      <path d={gulf} fill="#212c34" />
      <g fill="#202d37">{waters.map((d) => <path key={d} d={d} />)}</g>
      <g fill="#2a3528">{parks.map((d) => <path key={d} d={d} />)}</g>
      <g fill="none" stroke="#373738" strokeWidth="2" strokeLinejoin="round" strokeLinecap="round"><TileLayer data={roadPaths} /></g>
      <g fill="none" stroke="#43545a" strokeWidth="1" strokeDasharray="3 3"><TileLayer data={borders} /></g>
      {labels.map(([t, u, v, text, kind = 's', dot]) => {
        const [x, y] = at(t, u, v);
        const s = labelStyle[kind];
        const c = dot && at(t, dot[0], dot[1]);
        return (
          <g key={text + x}>
            <text x={x} y={y} fontSize={s.size} fontWeight={s.weight} letterSpacing={s.gap} fill={s.fill} stroke="#222" strokeWidth="2" paintOrder="stroke">{text}</text>
            {c && <circle cx={c[0]} cy={c[1]} r={kind === 's' ? 2.5 : 3} fill="#f2f2f2" />}
          </g>
        );
      })}
      {shields.map(([t, u, v, text]) => {
        const [x, y] = at(t, u, v);
        return <Shield key={`${x}-${y}`} x={x} y={y} text={text} />;
      })}
      <g fill="#0070b4"><TileLayer data={cores} /></g>
      <path d={pointPath} stroke="#0070b4" strokeOpacity="0.85" strokeWidth="5" strokeLinecap="round" />
      <text x="113" y="875" fontFamily="Lato, sans-serif" fontSize="25" fontWeight="400" fill="#fff" stroke="#fff" strokeWidth="0.6">Google</text>
    </svg>
  );
}

const stats: { label: string; value: string; icon: IconType }[] = [
  { label: 'Total Filings', value: '37,078', icon: MdContactPage },
  { label: 'Watched List', value: '127', icon: MdBookmark },
  { label: 'Recently Updated', value: '555', icon: MdUpdate },
  { label: 'Most Viewed', value: '297', icon: MdVisibility },
];

export default function App() {
  return (
    <>
      <GlobalStyle />
      <Header>
        <PageTitle>Louisiana Dashboard</PageTitle>
        <Account>
          <Points type="button">
            <MdStar size={24} />
            0 pts
          </Points>
          <Avatar type="button">BV</Avatar>
        </Account>
      </Header>
      <Content>
        <Stats>
          {stats.map(({ label, value, icon: Icon }) => (
            <StatCard key={label}>
              <StatIcon><Icon size={32} /></StatIcon>
              <div>
                <StatLabel>{label}</StatLabel>
                <StatValue>{value}</StatValue>
              </div>
            </StatCard>
          ))}
        </Stats>
        <MapCard $active>
          <CardHead>
            <MapTitle>Business Filings Map - Louisiana</MapTitle>
            <PeriodSelect />
          </CardHead>
          <MapFrame>
            <FilingsMap />
            <ZoomControl>
              <ZoomButton type="button" aria-label="Zoom in">
                <svg width="22" height="22" viewBox="0 0 22 22"><path d="M11 0v22M0 11h22" stroke="currentColor" strokeWidth="3" /></svg>
              </ZoomButton>
              <ZoomRule />
              <ZoomButton type="button" aria-label="Zoom out">
                <svg width="22" height="22" viewBox="0 0 22 22"><path d="M0 11h22" stroke="currentColor" strokeWidth="3" /></svg>
              </ZoomButton>
            </ZoomControl>
            <MapFooter>
              <button type="button">Keyboard shortcuts</button>
              <span>Map data ©2026 Google, INEGI</span>
              <a href="#terms">Terms</a>
              <a href="#report">Report a map error</a>
            </MapFooter>
          </MapFrame>
        </MapCard>
        <BreakdownCard>
          <BreakdownHead>
            <BreakdownText>
              <BreakdownTitle>Business Breakdown</BreakdownTitle>
              <Subtitle>Louisiana filings by industry</Subtitle>
            </BreakdownText>
            <Controls>
              <Tabs>
                <Tab type="button" $on>Industry</Tab>
                <Tab type="button">ZIP Code</Tab>
              </Tabs>
              <PeriodSelect />
            </Controls>
          </BreakdownHead>
          <BreakdownBody />
        </BreakdownCard>
      </Content>
    </>
  );
}
